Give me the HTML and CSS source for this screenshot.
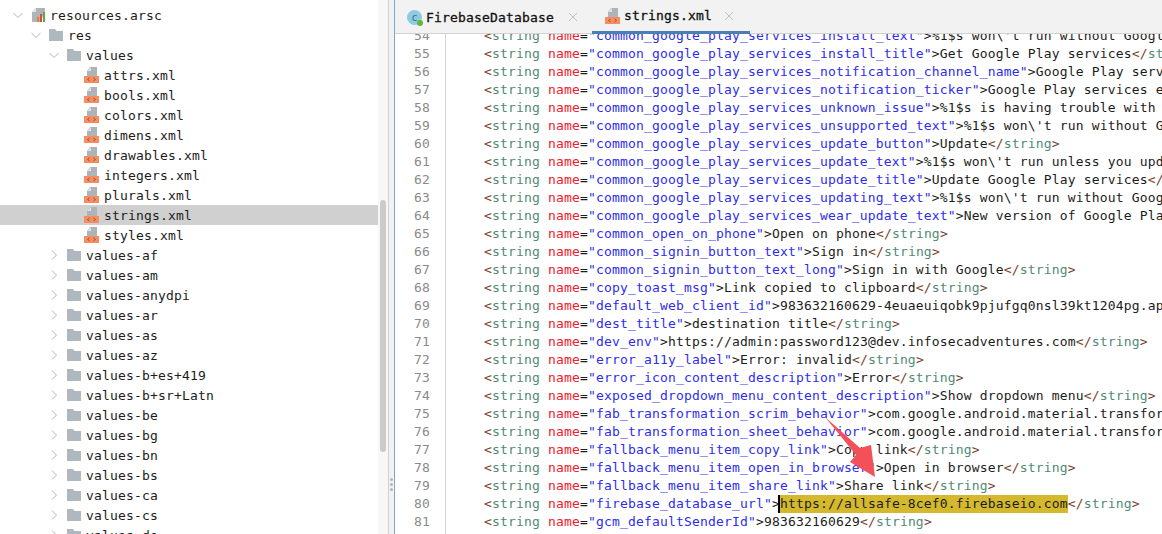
FILE: index.html
```html
<!DOCTYPE html>
<html lang="en">
<head>
  <meta charset="UTF-8" />
  <title>strings.xml</title>
  <link rel="stylesheet" href="styles.css">
</head>
<body>

  <svg class="defs" width="0" height="0">
    <symbol id="folder" viewBox="0 0 16 14">
      <path d="M1 1h6l1.500 2H15v10H1z" fill="#afb8bf"/>
    </symbol>
    <symbol id="xml" viewBox="0 0 16 16">
      <path d="M6 0h7v9H3V4z" fill="#afb4b8"/>
      <path d="M7 0v4H3z" fill="#e2e2e2"/>
      <rect x="0" y="9" width="15" height="7" fill="#f58d63"/>
      <path d="M5.500 11 3.500 12.500l2 1.500M9.500 11l2 1.500-2 1.500" fill="none" stroke="#8a4426" stroke-width=".8"/>
    </symbol>
    <symbol id="arsc" viewBox="0 0 16 16">
      <path d="M6 1h9v4l-5 10H2V5z" fill="#afb4b8"/>
      <path d="M6 1v4H2z" fill="#e6e6e6"/>
      <rect x="7" y="10" width="2" height="5" fill="#ef7a2a"/>
      <rect x="10" y="7" width="2" height="8" fill="#e0483a"/>
      <rect x="13" y="5" width="2" height="10" fill="#5fa83a"/>
    </symbol>
    <symbol id="open" viewBox="0 0 12 12">
      <path d="M1.500 4 6 8.500 10.500 4" fill="none" stroke="#b4b4b4" stroke-width="1"/>
    </symbol>
    <symbol id="shut" viewBox="0 0 12 12">
      <path d="M4 1.500 8.500 6 4 10.500" fill="none" stroke="#b4b4b4" stroke-width="1"/>
    </symbol>
    <symbol id="close" viewBox="0 0 10 10">
      <path d="M1 1l8 8M9 1l-8 8" stroke="#c4c4c4" stroke-width="1"/>
    </symbol>
  </svg>

  <div class="app">

    <!-- Arbol del proyecto -->
    <div class="tree">
      <div class="rows">
        <div class="row lv0"><svg class="twisty"><use href="#open"/></svg><svg class="icon"><use href="#arsc"/></svg>resources.arsc</div>
        <div class="row lv1"><svg class="twisty"><use href="#open"/></svg><svg class="icon"><use href="#folder"/></svg>res</div>
        <div class="row lv2"><svg class="twisty"><use href="#open"/></svg><svg class="icon"><use href="#folder"/></svg>values</div>
        <div class="row lv3"><span class="twisty"></span><svg class="icon"><use href="#xml"/></svg>attrs.xml</div>
        <div class="row lv3"><span class="twisty"></span><svg class="icon"><use href="#xml"/></svg>bools.xml</div>
        <div class="row lv3"><span class="twisty"></span><svg class="icon"><use href="#xml"/></svg>colors.xml</div>
        <div class="row lv3"><span class="twisty"></span><svg class="icon"><use href="#xml"/></svg>dimens.xml</div>
        <div class="row lv3"><span class="twisty"></span><svg class="icon"><use href="#xml"/></svg>drawables.xml</div>
        <div class="row lv3"><span class="twisty"></span><svg class="icon"><use href="#xml"/></svg>integers.xml</div>
        <div class="row lv3"><span class="twisty"></span><svg class="icon"><use href="#xml"/></svg>plurals.xml</div>
        <div class="row lv3 selected"><span class="twisty"></span><svg class="icon"><use href="#xml"/></svg>strings.xml</div>
        <div class="row lv3"><span class="twisty"></span><svg class="icon"><use href="#xml"/></svg>styles.xml</div>
        <div class="row lv2"><svg class="twisty"><use href="#shut"/></svg><svg class="icon"><use href="#folder"/></svg>values-af</div>
        <div class="row lv2"><svg class="twisty"><use href="#shut"/></svg><svg class="icon"><use href="#folder"/></svg>values-am</div>
        <div class="row lv2"><svg class="twisty"><use href="#shut"/></svg><svg class="icon"><use href="#folder"/></svg>values-anydpi</div>
        <div class="row lv2"><svg class="twisty"><use href="#shut"/></svg><svg class="icon"><use href="#folder"/></svg>values-ar</div>
        <div class="row lv2"><svg class="twisty"><use href="#shut"/></svg><svg class="icon"><use href="#folder"/></svg>values-as</div>
        <div class="row lv2"><svg class="twisty"><use href="#shut"/></svg><svg class="icon"><use href="#folder"/></svg>values-az</div>
        <div class="row lv2"><svg class="twisty"><use href="#shut"/></svg><svg class="icon"><use href="#folder"/></svg>values-b+es+419</div>
        <div class="row lv2"><svg class="twisty"><use href="#shut"/></svg><svg class="icon"><use href="#folder"/></svg>values-b+sr+Latn</div>
        <div class="row lv2"><svg class="twisty"><use href="#shut"/></svg><svg class="icon"><use href="#folder"/></svg>values-be</div>
        <div class="row lv2"><svg class="twisty"><use href="#shut"/></svg><svg class="icon"><use href="#folder"/></svg>values-bg</div>
        <div class="row lv2"><svg class="twisty"><use href="#shut"/></svg><svg class="icon"><use href="#folder"/></svg>values-bn</div>
        <div class="row lv2"><svg class="twisty"><use href="#shut"/></svg><svg class="icon"><use href="#folder"/></svg>values-bs</div>
        <div class="row lv2"><svg class="twisty"><use href="#shut"/></svg><svg class="icon"><use href="#folder"/></svg>values-ca</div>
        <div class="row lv2"><svg class="twisty"><use href="#shut"/></svg><svg class="icon"><use href="#folder"/></svg>values-cs</div>
        <div class="row lv2"><svg class="twisty"><use href="#shut"/></svg><svg class="icon"><use href="#folder"/></svg>values-de</div>
      </div>
      <div class="track"><div class="thumb"></div></div>
    </div>

    <div class="splitter"><i></i><i></i><i></i></div>

    <!-- Editor -->
    <div class="editor">
      <div class="tabs">
        <div class="tab first">
          <span class="class-icon">c<i></i></span>
          <span class="tab-name">FirebaseDatabase</span>
          <svg class="tab-close"><use href="#close"/></svg>
        </div>
        <div class="tab active">
          <svg class="icon"><use href="#xml"/></svg>
          <span class="tab-name">strings.xml</span>
          <svg class="tab-close"><use href="#close"/></svg>
        </div>
      </div>

      <div class="source">
        <div class="gutter">
          <div>54</div><div>55</div><div>56</div><div>57</div><div>58</div><div>59</div><div>60</div>
          <div>61</div><div>62</div><div>63</div><div>64</div><div>65</div><div>66</div><div>67</div>
          <div>68</div><div>69</div><div>70</div><div>71</div><div>72</div><div>73</div><div>74</div>
          <div>75</div><div>76</div><div>77</div><div>78</div><div>79</div><div>80</div><div>81</div>
          <div>82</div>
        </div>
        <div class="code">
          <div><b>&lt;</b><u>string</u> <em>name</em>=<s>"common_google_play_services_install_text"</s>&gt;%1$s won\'t run without Google Play services<b>&lt;/</b><u>string</u><b>&gt;</b></div>
          <div><b>&lt;</b><u>string</u> <em>name</em>=<s>"common_google_play_services_install_title"</s>&gt;Get Google Play services<b>&lt;/</b><u>string</u><b>&gt;</b></div>
          <div><b>&lt;</b><u>string</u> <em>name</em>=<s>"common_google_play_services_notification_channel_name"</s>&gt;Google Play services availability<b>&lt;/</b><u>string</u><b>&gt;</b></div>
          <div><b>&lt;</b><u>string</u> <em>name</em>=<s>"common_google_play_services_notification_ticker"</s>&gt;Google Play services error<b>&lt;/</b><u>string</u><b>&gt;</b></div>
          <div><b>&lt;</b><u>string</u> <em>name</em>=<s>"common_google_play_services_unknown_issue"</s>&gt;%1$s is having trouble with Google Play services<b>&lt;/</b><u>string</u><b>&gt;</b></div>
          <div><b>&lt;</b><u>string</u> <em>name</em>=<s>"common_google_play_services_unsupported_text"</s>&gt;%1$s won\'t run without Google Play services<b>&lt;/</b><u>string</u><b>&gt;</b></div>
          <div><b>&lt;</b><u>string</u> <em>name</em>=<s>"common_google_play_services_update_button"</s>&gt;Update<b>&lt;/</b><u>string</u><b>&gt;</b></div>
          <div><b>&lt;</b><u>string</u> <em>name</em>=<s>"common_google_play_services_update_text"</s>&gt;%1$s won\'t run unless you update Google Play services<b>&lt;/</b><u>string</u><b>&gt;</b></div>
          <div><b>&lt;</b><u>string</u> <em>name</em>=<s>"common_google_play_services_update_title"</s>&gt;Update Google Play services<b>&lt;/</b><u>string</u><b>&gt;</b></div>
          <div><b>&lt;</b><u>string</u> <em>name</em>=<s>"common_google_play_services_updating_text"</s>&gt;%1$s won\'t run without Google Play services<b>&lt;/</b><u>string</u><b>&gt;</b></div>
          <div><b>&lt;</b><u>string</u> <em>name</em>=<s>"common_google_play_services_wear_update_text"</s>&gt;New version of Google Play services<b>&lt;/</b><u>string</u><b>&gt;</b></div>
          <div><b>&lt;</b><u>string</u> <em>name</em>=<s>"common_open_on_phone"</s>&gt;Open on phone<b>&lt;/</b><u>string</u><b>&gt;</b></div>
          <div><b>&lt;</b><u>string</u> <em>name</em>=<s>"common_signin_button_text"</s>&gt;Sign in<b>&lt;/</b><u>string</u><b>&gt;</b></div>
          <div><b>&lt;</b><u>string</u> <em>name</em>=<s>"common_signin_button_text_long"</s>&gt;Sign in with Google<b>&lt;/</b><u>string</u><b>&gt;</b></div>
          <div><b>&lt;</b><u>string</u> <em>name</em>=<s>"copy_toast_msg"</s>&gt;Link copied to clipboard<b>&lt;/</b><u>string</u><b>&gt;</b></div>
          <div><b>&lt;</b><u>string</u> <em>name</em>=<s>"default_web_client_id"</s>&gt;983632160629-4euaeuiqobk9pjufgq0nsl39kt1204pg.apps.googleusercontent.com<b>&lt;/</b><u>string</u><b>&gt;</b></div>
          <div><b>&lt;</b><u>string</u> <em>name</em>=<s>"dest_title"</s>&gt;destination title<b>&lt;/</b><u>string</u><b>&gt;</b></div>
          <div><b>&lt;</b><u>string</u> <em>name</em>=<s>"dev_env"</s>&gt;https://admin:password123@dev.infosecadventures.com<b>&lt;/</b><u>string</u><b>&gt;</b></div>
          <div><b>&lt;</b><u>string</u> <em>name</em>=<s>"error_a11y_label"</s>&gt;Error: invalid<b>&lt;/</b><u>string</u><b>&gt;</b></div>
          <div><b>&lt;</b><u>string</u> <em>name</em>=<s>"error_icon_content_description"</s>&gt;Error<b>&lt;/</b><u>string</u><b>&gt;</b></div>
          <div><b>&lt;</b><u>string</u> <em>name</em>=<s>"exposed_dropdown_menu_content_description"</s>&gt;Show dropdown menu<b>&lt;/</b><u>string</u><b>&gt;</b></div>
          <div><b>&lt;</b><u>string</u> <em>name</em>=<s>"fab_transformation_scrim_behavior"</s>&gt;com.google.android.material.transformation.FabTransformationScrimBehavior<b>&lt;/</b><u>string</u><b>&gt;</b></div>
          <div><b>&lt;</b><u>string</u> <em>name</em>=<s>"fab_transformation_sheet_behavior"</s>&gt;com.google.android.material.transformation.FabTransformationSheetBehavior<b>&lt;/</b><u>string</u><b>&gt;</b></div>
          <div><b>&lt;</b><u>string</u> <em>name</em>=<s>"fallback_menu_item_copy_link"</s>&gt;Copy link<b>&lt;/</b><u>string</u><b>&gt;</b></div>
          <div><b>&lt;</b><u>string</u> <em>name</em>=<s>"fallback_menu_item_open_in_browser"</s>&gt;Open in browser<b>&lt;/</b><u>string</u><b>&gt;</b></div>
          <div><b>&lt;</b><u>string</u> <em>name</em>=<s>"fallback_menu_item_share_link"</s>&gt;Share link<b>&lt;/</b><u>string</u><b>&gt;</b></div>
          <div><b>&lt;</b><u>string</u> <em>name</em>=<s>"firebase_database_url"</s>&gt;<mark>https://allsafe-8cef0.firebaseio.com</mark><b>&lt;/</b><u>string</u><b>&gt;</b></div>
          <div><b>&lt;</b><u>string</u> <em>name</em>=<s>"gcm_defaultSenderId"</s>&gt;983632160629<b>&lt;/</b><u>string</u><b>&gt;</b></div>
          <div><b>&lt;</b><u>string</u> <em>name</em>=<s>"google_api_key"</s>&gt;<b>&lt;/</b><u>string</u><b>&gt;</b></div>
        </div>
      </div>
    </div>
  </div>

  <!-- Flecha roja encima del codigo -->
  <svg class="arrow" width="70" height="75" viewBox="820 410 70 75">
    <path d="M825 417 860 448 871 445 875 477 850 462 856 455z" fill="#f4505a"/>
  </svg>

</body>
</html>
```

FILE: styles.css
```css
* {
  box-sizing: border-box;
}

body {
  margin: 0;
  background-color: #fff;
  color: #1c1c1c;
  font-family: 'DejaVu Sans Mono', monospace;
  font-size: 13px;
  letter-spacing: 0.17px;
  overflow: hidden;
}

.defs {
  position: absolute;
}

.app {
  display: flex;
  width: 1162px;
  height: 534px;
  overflow: hidden;
}

/* Arbol */
.tree {
  display: flex;
  flex: none;
  width: 389px;
  border-right: 1px solid #d1d1d1;
}

.rows {
  width: 378px;
  padding-top: 5px;
}

.row {
  display: flex;
  align-items: center;
  height: 20px;
  white-space: nowrap;
}

.lv0 { padding-left: 12px; }
.lv1 { padding-left: 30px; }
.lv2 { padding-left: 48px; }
.lv3 { padding-left: 66px; }

.selected {
  background-color: #d0d0d0;
}

.twisty {
  flex: none;
  width: 12px;
  height: 12px;
  margin-right: 6px;
}

.icon {
  flex: none;
  width: 16px;
  height: 16px;
  margin-right: 4px;
}

.track {
  flex: 1;
  padding: 200px 0 0 2px;
  background-color: #f7f7f7;
}

.thumb {
  width: 6px;
  height: 252px;
  border-radius: 3px;
  background-color: #cbcbcb;
}

.splitter {
  display: flex;
  flex: none;
  flex-direction: column;
  align-items: center;
  gap: 2px;
  width: 5px;
  padding-top: 478px;
  background-color: #f2f2f2;
}

.splitter i {
  width: 3px;
  height: 3px;
  border-radius: 50%;
  background-color: #b4b4b4;
}

/* Editor */
.editor {
  flex: 1;
  min-width: 0;
  border-left: 1px solid #7aa7d8;
}

.tabs {
  display: flex;
  height: 34px;
  background-color: #f2f2f2;
  border-bottom: 1px solid #d1d1d1;
}

.tab {
  display: flex;
  align-items: center;
  height: 34px;
}

.first {
  width: 197px;
  padding-left: 12px;
}

.active {
  width: 158px;
  padding-left: 13px;
  border-bottom: 3px solid #4a7fb5;
}

.tab-name {
  color: #111;
  -webkit-text-stroke: 0.3px #111;
}

.first .tab-name {
  margin-left: -1px;
}

.active .tab-name {
  margin-left: -1px;
}

.class-icon {
  display: flex;
  position: relative;
  flex: none;
  align-items: center;
  justify-content: center;
  width: 15px;
  height: 15px;
  margin-right: 5px;
  border-radius: 50%;
  background-color: #8ccbe3;
  color: #3a6a7a;
  font-size: 10px;
}

.class-icon i {
  position: absolute;
  right: -1px;
  bottom: -1px;
  width: 6px;
  height: 6px;
  border-radius: 50%;
  background-color: #5fb83a;
}

.tab-close {
  flex: none;
  width: 10px;
  height: 10px;
  margin-left: 14px;
}

.active .tab-close {
  margin-left: 12px;
}

.source {
  display: flex;
  height: 500px;
  overflow: hidden;
}

.gutter {
  flex: none;
  width: 51px;
  margin-top: -7px;
  padding-right: 15px;
  border-right: 1px solid #d4d4d4;
  color: #8a8a8a;
  line-height: 18px;
  text-align: right;
}

.code {
  flex: 1;
  min-width: 0;
  margin-top: -7px;
  padding-left: 38px;
  line-height: 18px;
  white-space: nowrap;
}

.code b {
  font-weight: normal;
  color: #7a3f2a;
}

.code u {
  text-decoration: none;
  color: #4f8a78;
}

.code em {
  font-style: normal;
  color: #f0202c;
}

.code s {
  text-decoration: none;
  color: #2d2df0;
}

.code mark {
  display: inline-block;
  height: 18px;
  margin-left: -2px;
  border-left: 2px solid #000;
  background-color: #d4b92e;
  color: #1c1c1c;
}

.arrow {
  position: absolute;
  top: 410px;
  left: 820px;
}
```
